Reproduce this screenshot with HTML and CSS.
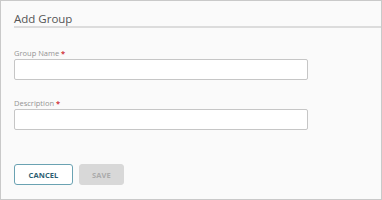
FILE: index.html
```html
<!DOCTYPE html>
<html>
<head>
<meta charset="utf-8">
<link rel="stylesheet" href="styles.css">
</head>
<body>
<div class="panel">
  <div class="header"><span class="title">Add Group</span></div>
  <div class="form">
    <div class="field first">
      <label class="label">Group Name <span class="req">*</span></label>
      <input class="input" type="text">
    </div>
    <div class="field">
      <label class="label">Description <span class="req">*</span></label>
      <input class="input" type="text">
    </div>
    <div class="actions">
      <button class="btn cancel">CANCEL</button>
      <button class="btn save">SAVE</button>
    </div>
  </div>
</div>
</body>
</html>
```
FILE: styles.css
```css
html, body {
  margin: 0;
  padding: 0;
}
body {
  font-family: "Open Sans", "Liberation Sans", sans-serif;
}
.panel {
  box-sizing: border-box;
  width: 382px;
  height: 200px;
  border: 1px solid #c9c9c9;
  background: #fafafa;
  padding-left: 13px;
}
.header {
  padding-top: 10px;
  border-bottom: 2px solid #dcdcdc;
  height: 15px;
}
.title {
  display: block;
  font-size: 11.5px;
  line-height: 15px;
  color: #555;
}
.form {
  width: 294px;
}
.field {
  display: flex;
  flex-direction: column;
  margin-top: 18px;
}
.field.first {
  margin-top: 20px;
}
.label {
  font-size: 7.5px;
  line-height: 10px;
  color: #949494;
  margin-bottom: 1px;
}
.req {
  color: #d0343a;
  font-weight: bold;
}
.input {
  box-sizing: border-box;
  width: 294px;
  height: 21px;
  margin: 0;
  border: 1px solid #c6c6c6;
  border-radius: 2px;
  background: #fff;
  padding: 0 4px;
}
.actions {
  display: flex;
  gap: 6px;
  margin-top: 34px;
}
.btn {
  box-sizing: border-box;
  height: 21px;
  margin: 0;
  padding: 0;
  font-family: "Open Sans", "Liberation Sans", sans-serif;
  font-size: 7.5px;
  font-weight: bold;
  border-radius: 3px;
  letter-spacing: 0.1px;
}
.cancel {
  width: 59px;
  background: #fff;
  border: 1px solid #6aa2b2;
  color: #2c5e72;
}
.save {
  width: 45px;
  background: #d8d8d8;
  border: 1px solid #d8d8d8;
  color: #ababab;
}
```
